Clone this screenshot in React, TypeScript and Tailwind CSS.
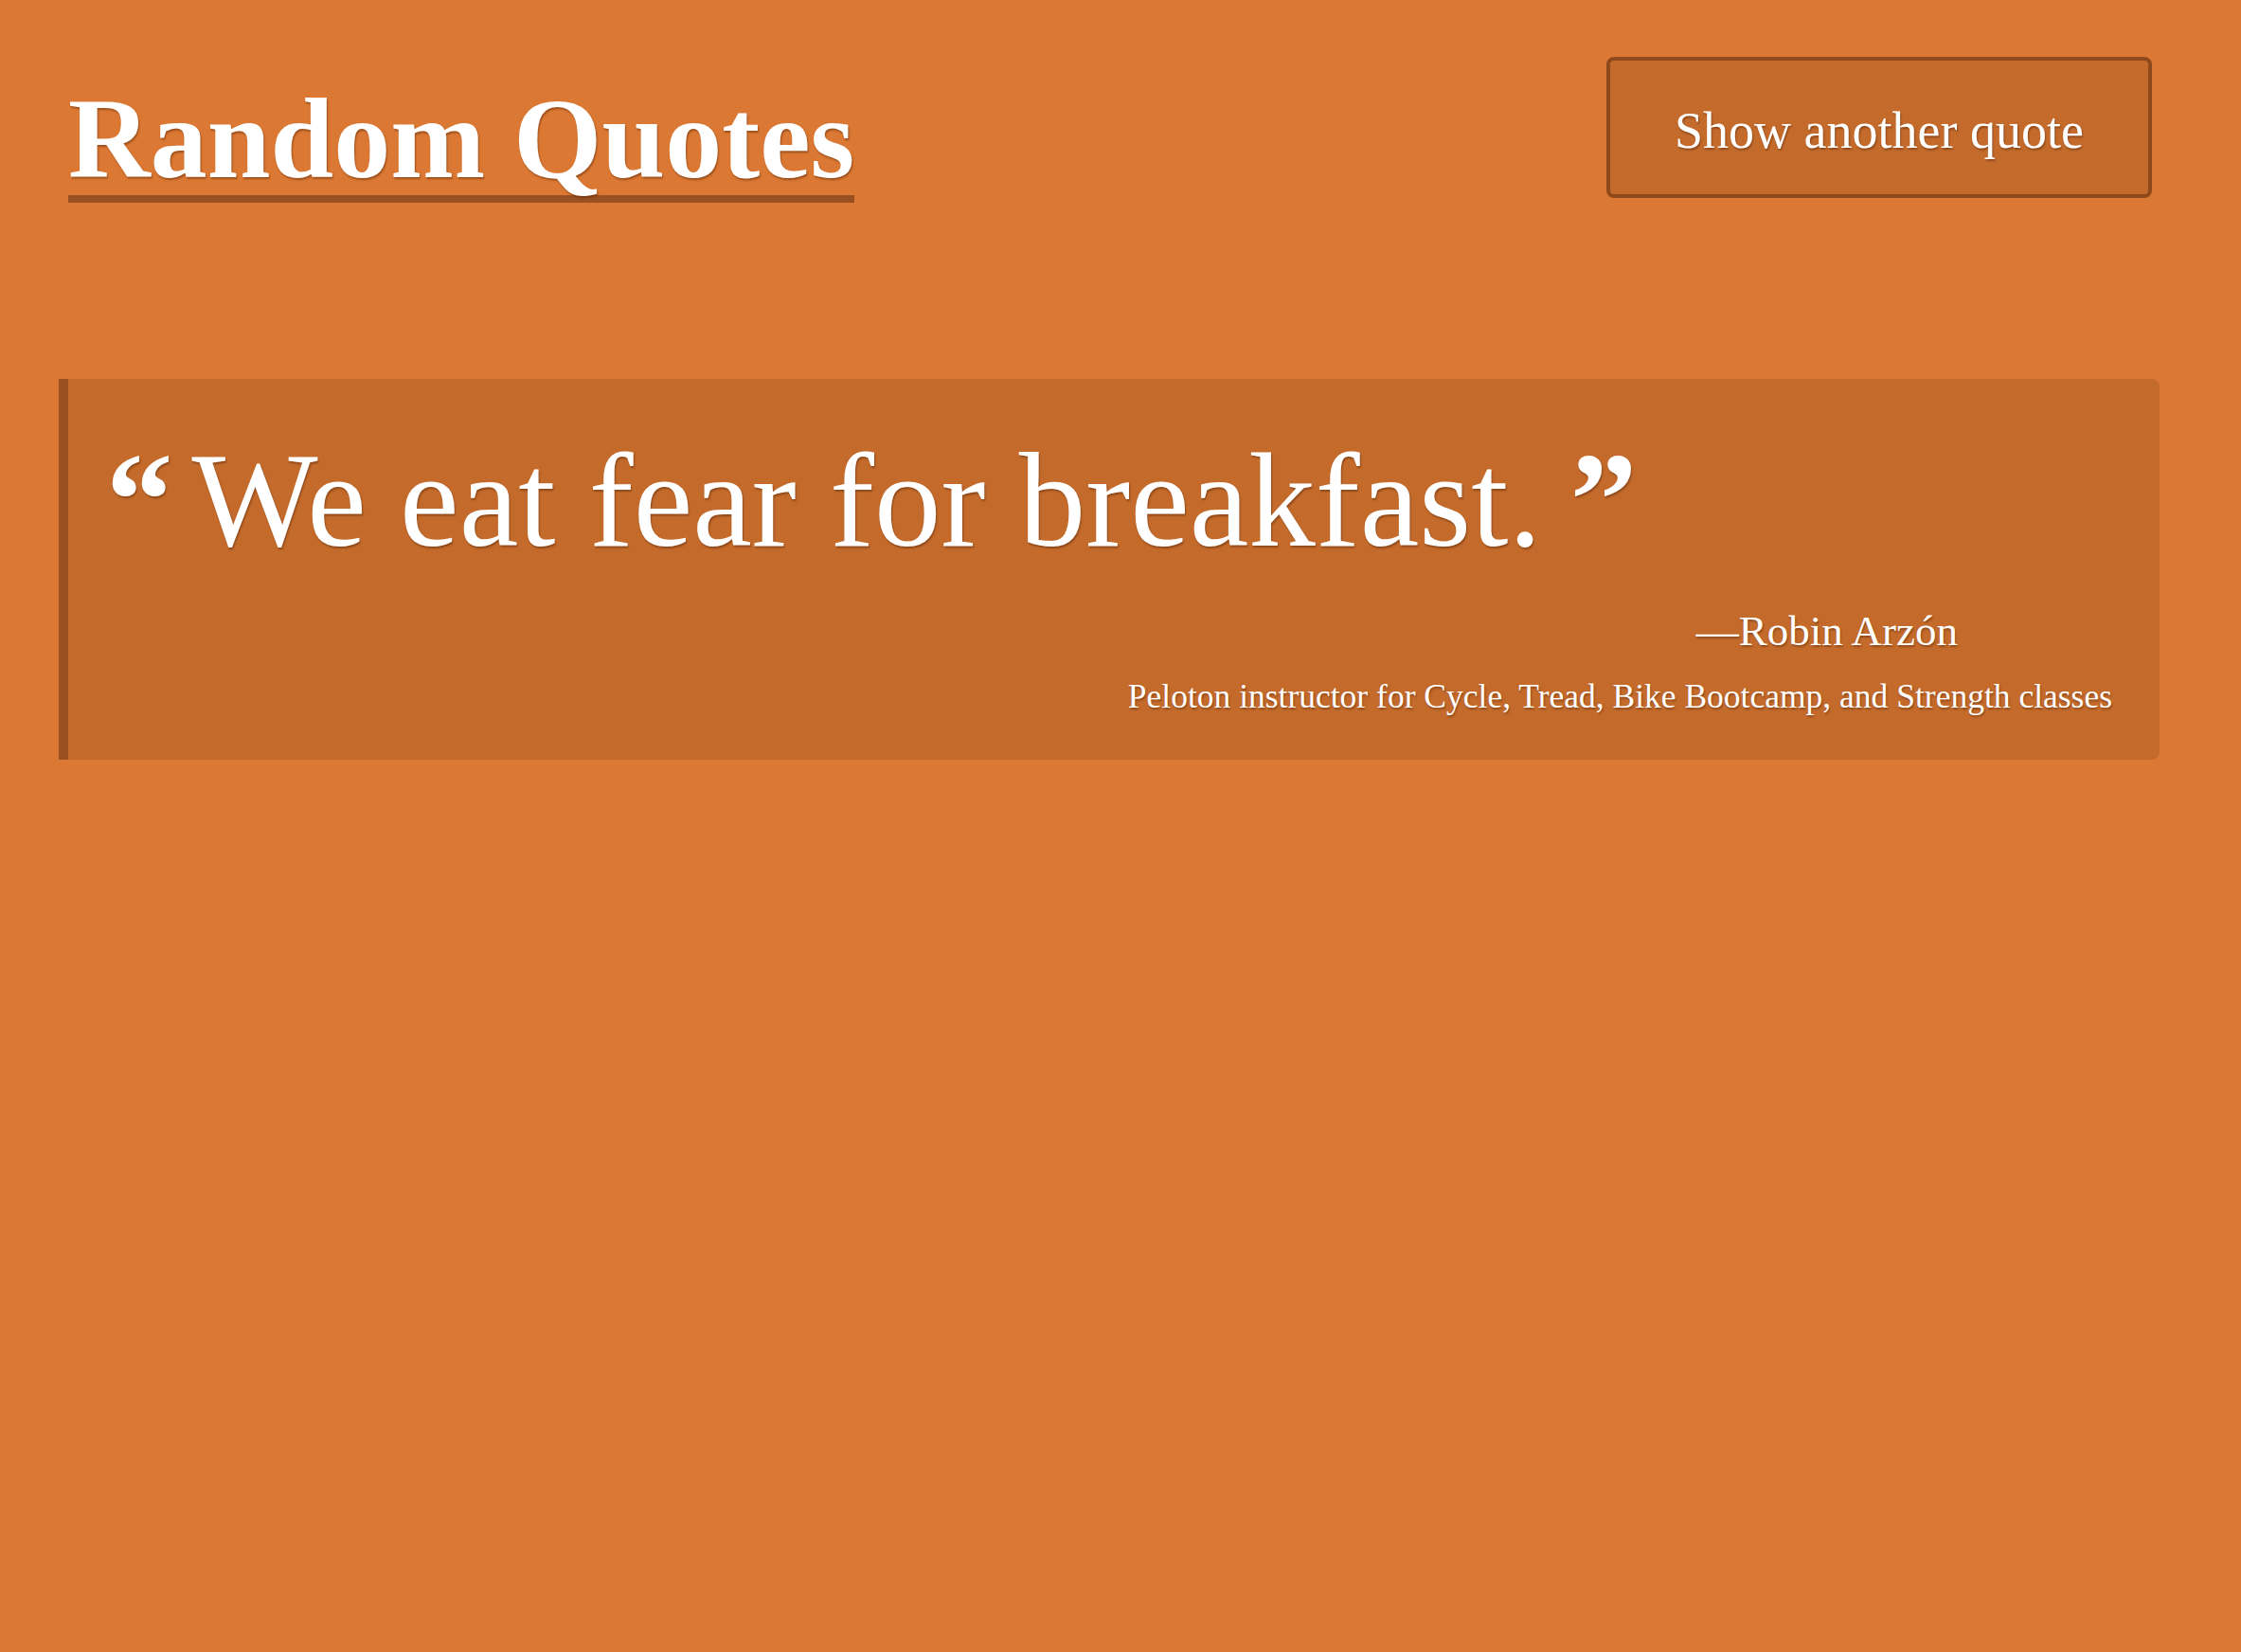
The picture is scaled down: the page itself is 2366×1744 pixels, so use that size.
import React from 'react';

const quote = {
  text: 'We eat fear for breakfast.',
  author: 'Robin Arzón',
  role: 'Peloton instructor for Cycle, Tread, Bike Bootcamp, and Strength classes',
};

const shadow = '[text-shadow:1px_2px_2px_rgba(80,30,0,0.45)]';

export default function App() {
  return (
    <div
      className="min-h-screen w-full bg-[#db7833] text-white"
      style={{ fontFamily: '"Liberation Serif", "DejaVu Serif", serif' }}
    >
      {/* Header */}
      <header className="flex items-start justify-between pl-[72px] pr-[94px] pt-[60px]">
        <h1
          className={`inline-block border-b-[8px] border-[#9a5020] pt-[37px] pb-[9px] text-[120px] font-bold leading-[100px] ${shadow}`}
        >
          Random Quotes
        </h1>
        <button
          className={`h-[149px] w-[576px] rounded-lg border-4 border-[#8f4a1c] bg-[#c46b2c] pt-[8px] text-[54px] ${shadow}`}
        >
          Show another quote
        </button>
      </header>

      {/* Quote */}
      <blockquote className="ml-[62px] mr-[86px] mt-[186px] rounded-r-lg border-l-[10px] border-[#9a5020] bg-[#c46b2c] pb-[47px] pl-[40px] pr-[50px] pt-[68px]">
        <p className={`flex items-start text-[141px] leading-[120px] ${shadow}`}>
          <span className="mr-[20px] font-bold">“</span>
          <span>{quote.text}</span>
          <span className="ml-[30px] font-bold">”</span>
        </p>
        <div className={`mt-[53px] flex flex-col items-end ${shadow}`}>
          <div className="mr-[163px] text-[45px] leading-[50px]">—{quote.author}</div>
          <div className="mt-[24px] text-[35.5px] leading-[40px]">{quote.role}</div>
        </div>
      </blockquote>
    </div>
  );
}
